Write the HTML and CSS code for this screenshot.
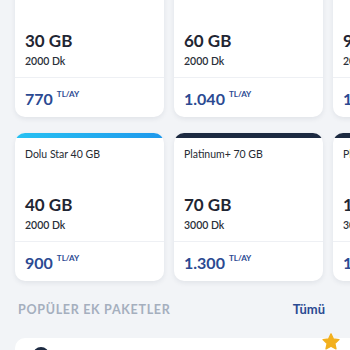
FILE: index.html
```html
<!DOCTYPE html>
<html lang="tr">
<head>
<meta charset="utf-8">
<link rel="stylesheet" href="styles.css">
</head>
<body>
<div class="page">
  <div class="row row-top">
    <div class="card">
      <div class="bar bar-blue"></div>
      <div class="body"><div class="name">Dolu Star 30 GB</div><div class="amt"><div class="gb">30 GB</div><div class="dk">2000 Dk</div></div></div>
      <div class="price"><span class="num">770</span><span class="unit">TL/AY</span></div>
    </div>
    <div class="card">
      <div class="bar bar-dark"></div>
      <div class="body"><div class="name">Platinum+ 60 GB</div><div class="amt"><div class="gb">60 GB</div><div class="dk">2000 Dk</div></div></div>
      <div class="price"><span class="num">1.040</span><span class="unit">TL/AY</span></div>
    </div>
    <div class="card">
      <div class="bar bar-dark"></div>
      <div class="body"><div class="name">Platinum+ 90 GB</div><div class="amt"><div class="gb">90 GB</div><div class="dk">2000 Dk</div></div></div>
      <div class="price"><span class="num">1.190</span><span class="unit">TL/AY</span></div>
    </div>
  </div>
  <div class="row">
    <div class="card">
      <div class="bar bar-blue"></div>
      <div class="body"><div class="name">Dolu Star 40 GB</div><div class="amt"><div class="gb">40 GB</div><div class="dk">2000 Dk</div></div></div>
      <div class="price"><span class="num">900</span><span class="unit">TL/AY</span></div>
    </div>
    <div class="card">
      <div class="bar bar-dark"></div>
      <div class="body"><div class="name">Platinum+ 70 GB</div><div class="amt"><div class="gb">70 GB</div><div class="dk">3000 Dk</div></div></div>
      <div class="price"><span class="num">1.300</span><span class="unit">TL/AY</span></div>
    </div>
    <div class="card">
      <div class="bar bar-dark"></div>
      <div class="body"><div class="name">Platinum+ 100 GB</div><div class="amt"><div class="gb">100 GB</div><div class="dk">3000 Dk</div></div></div>
      <div class="price"><span class="num">1.500</span><span class="unit">TL/AY</span></div>
    </div>
  </div>
  <div class="section-head">
    <span class="section-title">POPÜLER EK PAKETLER</span>
    <span class="all">Tümü</span>
  </div>
  <div class="addon">
    <div class="avatar"></div>
    <svg class="star" viewBox="0 0 24 24" width="20" height="20"><path d="M12 2.2l2.9 6.2 6.7.7-5 4.6 1.4 6.6L12 17l-6 3.3 1.4-6.6-5-4.6 6.7-.7z" fill="#f2b01e" stroke="#f2b01e" stroke-width="1.6" stroke-linejoin="round"/></svg>
  </div>
</div>
</body>
</html>
```
FILE: styles.css
```css
html, body {
  margin: 0;
  padding: 0;
  background: #f2f4f7;
  width: 350px;
  height: 350px;
  overflow: hidden;
}
.page {
  font-family: Lato, "Open Sans", sans-serif;
  color: #1f2633;
  padding-left: 15px;
}
.row {
  display: flex;
  gap: 10px;
  width: 600px;
}
.row-top {
  margin-top: -31px;
  margin-bottom: 16px;
}
.card {
  flex: 0 0 149px;
  background: #fff;
  border-radius: 10px;
  overflow: hidden;
  box-shadow: 0 2px 5px rgba(30, 40, 70, 0.08);
  display: flex;
  flex-direction: column;
}
.bar {
  height: 5px;
}
.bar-blue {
  background: linear-gradient(90deg, #27c1f2, #1e98ec);
}
.bar-dark {
  background: #1c2a41;
}
.body {
  height: 104px;
  box-sizing: border-box;
  padding: 10px 10px 9px;
  display: flex;
  flex-direction: column;
  justify-content: space-between;
  border-bottom: 1px solid #eef0f4;
}
.name {
  font-size: 10.5px;
  line-height: 13px;
  color: #262b33;
}
.gb {
  font-size: 17px;
  font-weight: 700;
  line-height: 20px;
}
.dk {
  font-size: 10.5px;
  font-weight: 600;
  line-height: 13px;
  margin-top: 4px;
  color: #2a303a;
}
.price {
  height: 39px;
  box-sizing: border-box;
  padding: 12px 10px 0;
  color: #2b4a92;
  font-weight: 700;
  display: flex;
  align-items: flex-start;
}
.num {
  font-size: 16px;
  line-height: 18px;
}
.unit {
  font-size: 8px;
  line-height: 8px;
  margin-left: 4px;
}
.section-head {
  display: flex;
  justify-content: space-between;
  align-items: center;
  width: 307px;
  padding: 20px 0 0 3px;
  height: 16px;
}
.section-title {
  font-size: 12.5px;
  font-weight: 700;
  letter-spacing: 0.7px;
  color: #a5afbe;
}
.all {
  font-size: 13px;
  font-weight: 700;
  color: #2b4a92;
}
.addon {
  position: relative;
  margin-top: 21px;
  width: 340px;
  height: 60px;
  background: #fff;
  border-radius: 10px 0 0 0;
}
.avatar {
  position: absolute;
  left: 18px;
  top: 9px;
  width: 16px;
  height: 16px;
  border-radius: 50%;
  background: #1c2a41;
}
.star {
  position: absolute;
  left: 306px;
  top: -6px;
}
```
